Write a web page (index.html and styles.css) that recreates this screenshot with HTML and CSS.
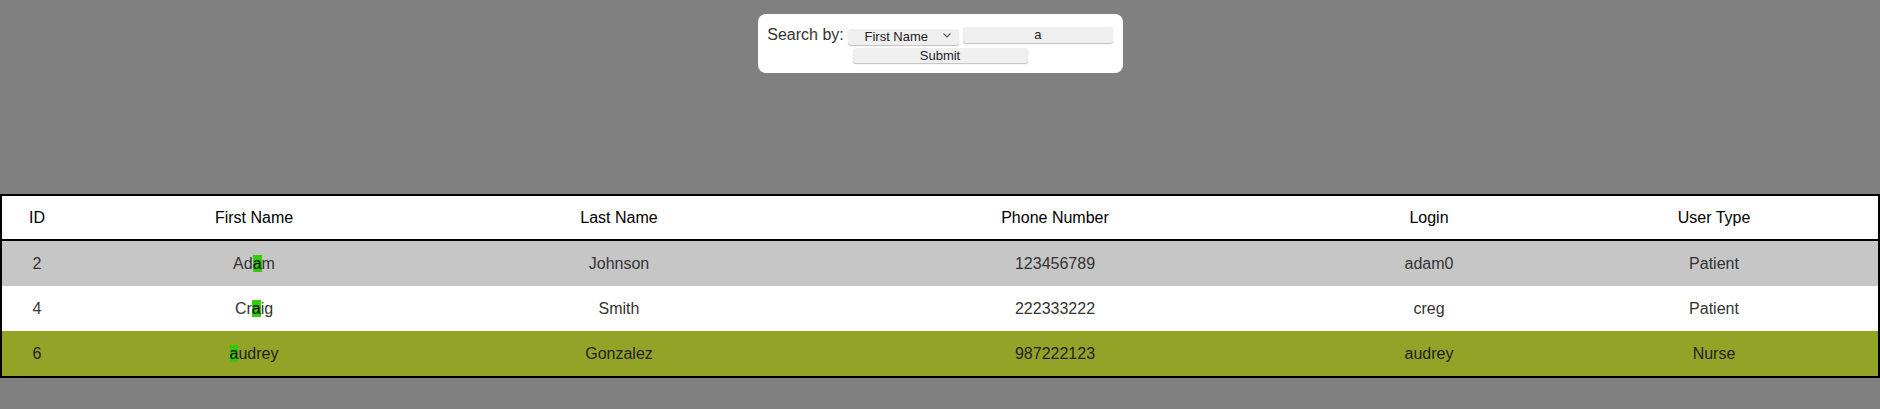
FILE: index.html
```html
<!DOCTYPE html>
<html lang="en">
<head>
<meta charset="utf-8">
<title>Users</title>
<link rel="stylesheet" href="styles.css">
</head>
<body>
<form class="search">
  <div class="search-row">
    <label class="search-label" for="field">Search by:</label>
    <span class="select-wrap">
      <select id="field" class="field-select">
        <option>First Name</option>
        <option>Last Name</option>
        <option>Login</option>
      </select>
      <svg class="chevron" width="8" height="5" viewBox="0 0 8 5"><path d="M0.5 0.5 L4 4 L7.5 0.5" fill="none" stroke="#555" stroke-width="1.1"/></svg>
    </span>
    <input class="query" type="text" value="a">
  </div>
  <button class="submit" type="button">Submit</button>
</form>

<table class="users">
  <colgroup>
    <col class="c-id"><col class="c-first"><col class="c-last"><col class="c-phone"><col class="c-login"><col class="c-type">
  </colgroup>
  <thead>
    <tr>
      <th>ID</th>
      <th>First Name</th>
      <th>Last Name</th>
      <th>Phone Number</th>
      <th>Login</th>
      <th>User Type</th>
    </tr>
  </thead>
  <tbody>
    <tr class="row-gray">
      <td>2</td>
      <td>Ad<mark class="hit">a</mark>m</td>
      <td>Johnson</td>
      <td>123456789</td>
      <td>adam0</td>
      <td>Patient</td>
    </tr>
    <tr class="row-white">
      <td>4</td>
      <td>Cr<mark class="hit">a</mark>ig</td>
      <td>Smith</td>
      <td>222333222</td>
      <td>creg</td>
      <td>Patient</td>
    </tr>
    <tr class="row-olive">
      <td>6</td>
      <td><mark class="hit">a</mark>udrey</td>
      <td>Gonzalez</td>
      <td>987222123</td>
      <td>audrey</td>
      <td>Nurse</td>
    </tr>
  </tbody>
</table>
</body>
</html>
```

FILE: styles.css
```css
html, body {
  margin: 0;
  padding: 0;
}
body {
  background: #808080;
  font-family: "Liberation Sans", Arial, sans-serif;
  color: #333;
}

.search {
  box-sizing: border-box;
  width: 365px;
  margin: 14px auto 0;
  padding: 13px 10px 10px;
  background: #fff;
  border-radius: 8px;
  display: flex;
  flex-direction: column;
  align-items: center;
  gap: 5px;
}
.search-row {
  display: flex;
  align-items: center;
  gap: 4px;
  height: 16px;
}
.search-label {
  flex: none;
  white-space: nowrap;
  font-size: 16px;
  line-height: 16px;
  color: #333;
}
.select-wrap {
  flex: none;
  position: relative;
  display: block;
  width: 111px;
  height: 16px;
}
.field-select {
  -webkit-appearance: none;
  appearance: none;
  box-sizing: border-box;
  width: 111px;
  height: 16px;
  margin: 0;
  padding: 0 14px 0 0;
  border: 0;
  border-radius: 3px;
  background: #efefef;
  box-shadow: 0 1px 1px rgba(0, 0, 0, 0.25);
  font-family: "Liberation Sans", Arial, sans-serif;
  font-size: 13px;
  line-height: 16px;
  color: #222;
  text-align: center;
  text-align-last: center;
  outline: none;
}
.chevron {
  position: absolute;
  right: 8px;
  top: 6px;
  pointer-events: none;
}
.query {
  flex: none;
  box-sizing: border-box;
  width: 150px;
  height: 16px;
  margin: 0;
  padding: 0;
  border: 0;
  border-radius: 3px;
  background: #efefef;
  box-shadow: 0 1px 1px rgba(0, 0, 0, 0.25);
  font-family: "Liberation Sans", Arial, sans-serif;
  font-size: 13px;
  line-height: 16px;
  color: #222;
  text-align: center;
  outline: none;
}
.submit {
  box-sizing: border-box;
  width: 175px;
  height: 15px;
  margin: 0;
  padding: 0;
  border: 0;
  border-radius: 3px;
  background: #efefef;
  box-shadow: 0 1px 1px rgba(0, 0, 0, 0.25);
  font-family: "Liberation Sans", Arial, sans-serif;
  font-size: 13px;
  line-height: 15px;
  color: #222;
}

.users {
  width: 100%;
  margin-top: 121px;
  border: 2px solid #000;
  border-collapse: separate;
  border-spacing: 0;
  table-layout: fixed;
  background: #fff;
  font-size: 16px;
}
.c-id { width: 70px; }
.c-first { width: 364px; }
.c-last { width: 366px; }
.c-phone { width: 506px; }
.c-login { width: 242px; }
.c-type { width: 328px; }

.users th,
.users td {
  padding: 0;
  text-align: center;
  white-space: nowrap;
}
.users th {
  height: 43px;
  line-height: 43px;
  border-bottom: 2px solid #000;
  color: #000;
  font-weight: normal;
}
.users td {
  height: 45px;
  line-height: 45px;
  color: #333;
}
.row-gray { background: #c6c6c6; }
.row-white { background: #fff; }
.row-olive { background: #93a328; }
.row-olive td { color: #222; }

.hit {
  background: #33cc00;
  color: #000;
  padding: 0;
}
```
